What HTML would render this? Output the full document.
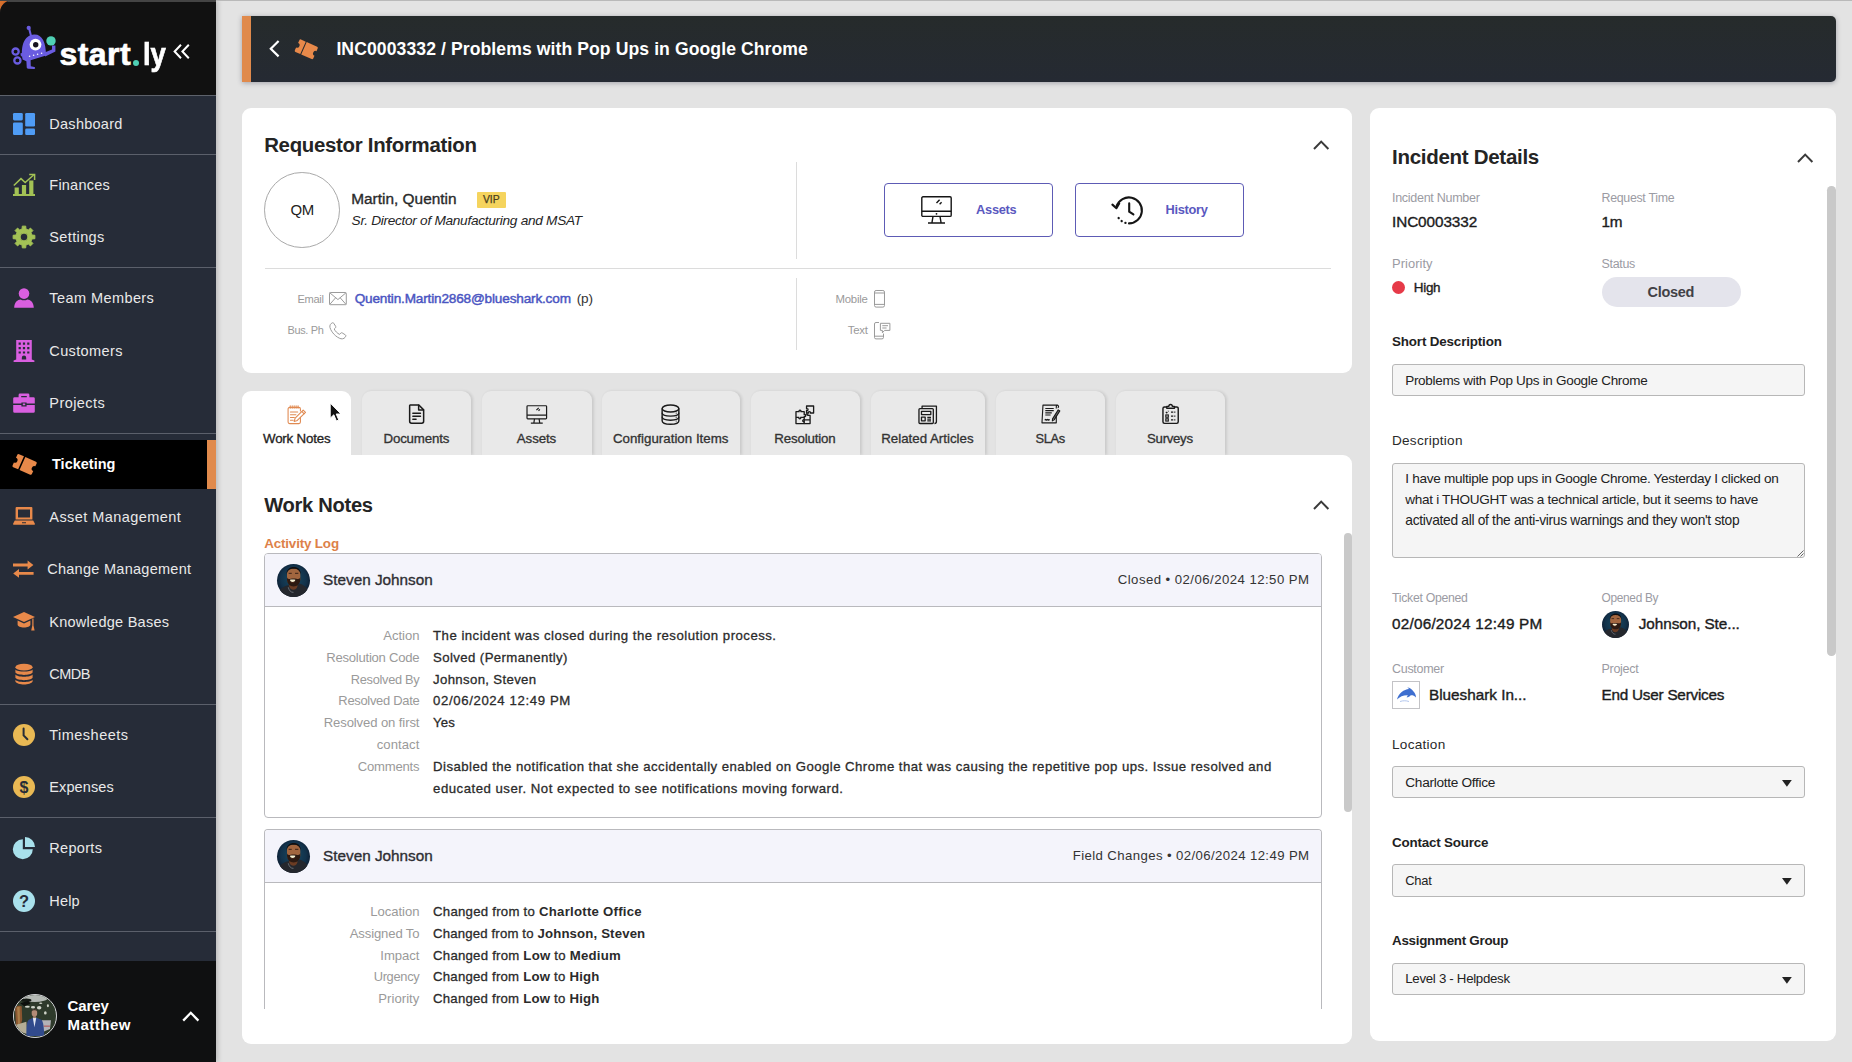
<!DOCTYPE html>
<html lang="en">
<head>
<meta charset="utf-8">
<title>INC0003332 / Problems with Pop Ups in Google Chrome</title>
<style>
*{box-sizing:border-box;margin:0;padding:0}
html,body{width:1852px;height:1062px;overflow:hidden}
body{background:#e3e3e3;font-family:"Liberation Sans",Arial,sans-serif;color:#222;position:relative}
.abs{position:absolute}
.t{position:absolute;white-space:nowrap;display:block}
.r{text-align:right}
svg{display:block;position:absolute;overflow:visible}
/* sidebar */
#corner{position:absolute;left:0;top:0;width:30px;height:30px;background:#d9702c}
#side{position:absolute;left:0;top:0;width:216px;height:1062px;background:#262c38;border-top-left-radius:13px;overflow:hidden;box-shadow:2px 0 5px rgba(0,0,0,.18)}
#side .logo{position:absolute;left:0;top:0;width:216px;height:95px;background:#111;border-top:2px solid #444;border-bottom:1px solid #5d626b;height:96px}
#side .sep{position:absolute;left:0;width:216px;height:1px;background:#5b606b}
#side .it{position:absolute;left:0;width:216px;height:48.8px}
#side .it.on{background:#000;height:49.3px}
#side .it.on:after{content:"";position:absolute;right:0;top:0;width:9px;height:100%;background:#e08a4c}
#side .it .t{left:49.3px;top:.5px;line-height:48.8px;font-size:14.5px;color:#e9e9e9}
#side .it svg{left:13px;top:13.4px;width:22px;height:22px}
#side .user{position:absolute;left:0;top:961px;width:216px;height:101px;background:#0f1011}
/* top bar */
#top{position:absolute;left:242px;top:16px;width:1594px;height:66px;background:linear-gradient(#262b2b,#252a33);border-left:9px solid #e08a4c;border-radius:0 5px 5px 0;box-shadow:0 1px 5px rgba(40,40,60,.35)}
.card{position:absolute;background:#fff;border-radius:9px}
.lbl{color:#9a9a9a}
</style>
</head>
<body>
<div id="corner"></div>
<aside id="side">
<div class="logo"><svg style="left:10.6px;top:23.5px;width:45px;height:44px" viewBox="0 0 45 44">
<g fill="#6a5ce0" stroke="none">
<circle cx="17.7" cy="1.9" r="2.1"/>
<path d="M16.9 2 L18.9 1.6 L21.2 10.4 L19.2 10.8Z"/>
<path d="M11.6 33.5 C9.2 20 13.5 9.2 23 8.6 C31 8.2 35 16 35 29.4 L19.6 34.2 L19.8 40.2 L23.4 40.9 C24.6 41.3 24.4 43 23 43 L17.2 42.8 C16.2 42.7 15.7 42 15.7 41 L15.4 35.2 Z"/>
<path d="M33.5 26.4 L41 23.4 L41 19.4 L44.4 19.4 L44.4 25.6 L34.2 30.4Z"/>
<path d="M9.4 27.4 L12.4 26.6 L13 29.6 L10 30.4Z"/>
</g>
<g fill="none" stroke="#6a5ce0" stroke-width="2.3"><circle cx="4.6" cy="25.6" r="3.1"/><circle cx="6.4" cy="34.4" r="3.1"/></g>
<circle cx="24.5" cy="18.6" r="5.9" fill="#fff"/><circle cx="24.7" cy="18.8" r="2.7" fill="#17131f"/>
<circle cx="40" cy="14.9" r="4.7" fill="#4fd0b4"/>
<g fill="#fff"><circle cx="18.6" cy="30.3" r=".8"/><circle cx="22.6" cy="29.3" r=".8"/><circle cx="26.6" cy="28.3" r=".8"/><circle cx="30.6" cy="27.3" r=".8"/></g>
</svg>
<span class="t" style="letter-spacing:0.409px;left:59.6px;top:29.6px;line-height:44px;font-size:32px;font-weight:700;color:#fff;-webkit-text-stroke:.7px #fff">start</span>
<span class="t" style="left:132.9px;top:57.6px;width:6.6px;height:6.6px;border-radius:50%;background:#4fd0b4;color:#4fd0b4;font-size:8px;line-height:6.6px;font-weight:700;overflow:hidden;text-align:center">.</span>
<span class="t" style="letter-spacing:-0.234px;left:142.6px;top:29.6px;line-height:44px;font-size:32px;font-weight:700;color:#fff;-webkit-text-stroke:.7px #fff;transform:scaleX(.86);transform-origin:0 0">ly</span>
<svg style="left:173px;top:41.5px;width:17px;height:15px" viewBox="0 0 17 15"><path d="M8 0.8 L1.6 7.5 L8 14.2 M15.8 0.8 L9.4 7.5 L15.8 14.2" fill="none" stroke="#fff" stroke-width="2"/></svg>
</div>
<nav>
<div class="it" style="top:99.6px"><svg viewBox="0 0 22 22"><g fill="#4f9cf5"><rect x="0" y="0" width="9.8" height="7.4" rx="1.3"/><rect x="0" y="9.4" width="9.8" height="12.6" rx="1.3"/><rect x="12.2" y="0" width="9.8" height="13.6" rx="1.3"/><rect x="12.2" y="15.6" width="9.8" height="6.4" rx="1.3"/></g></svg><span class="t" style="letter-spacing:0.266px">Dashboard</span></div>
<div class="it" style="top:160.5px"><svg viewBox="0 0 22 22"><g fill="#a3c255"><rect x="0" y="20" width="22" height="2"/><rect x="1.6" y="13.5" width="4.2" height="6.5"/><rect x="8.9" y="11" width="4.2" height="9"/><rect x="16.2" y="6.5" width="4.2" height="13.5"/></g><path d="M0.8 11.5 L8 4.6 L12.2 8.6 L20.6 1" fill="none" stroke="#a3c255" stroke-width="1.5"/><path d="M16.2 0.6 H21.6 V6" fill="none" stroke="#a3c255" stroke-width="1.5"/></svg><span class="t" style="letter-spacing:0.221px">Finances</span></div>
<div class="it" style="top:212.9px"><svg viewBox="0 0 22 22"><path d="M9.28 0.14 L12.72 0.14 L12.91 3.03 L15.28 4.01 L17.47 2.10 L19.90 4.53 L17.99 6.72 L18.97 9.09 L21.86 9.28 L21.86 12.72 L18.97 12.91 L17.99 15.28 L19.90 17.47 L17.47 19.90 L15.28 17.99 L12.91 18.97 L12.72 21.86 L9.28 21.86 L9.09 18.97 L6.72 17.99 L4.53 19.90 L2.10 17.47 L4.01 15.28 L3.03 12.91 L0.14 12.72 L0.14 9.28 L3.03 9.09 L4.01 6.72 L2.10 4.53 L4.53 2.10 L6.72 4.01 L9.09 3.03Z M7.1 11 a3.9 3.9 0 1 0 7.8 0 a3.9 3.9 0 1 0 -7.8 0Z" fill="#a3c255" fill-rule="evenodd" stroke="#a3c255" stroke-width="1" stroke-linejoin="round"/></svg><span class="t" style="letter-spacing:0.373px">Settings</span></div>
<div class="it" style="top:273.9px"><svg viewBox="0 0 22 22"><g fill="#d95fe0"><circle cx="11" cy="6.6" r="5.3"/><path d="M1.2 20.8 C1.2 15.2 4.8 12.4 7.6 12.4 C9.6 13.6 12.4 13.6 14.4 12.4 C17.2 12.4 20.8 15.2 20.8 20.8 Z"/></g></svg><span class="t" style="letter-spacing:0.424px">Team Members</span></div>
<div class="it" style="top:326.3px"><svg viewBox="0 0 22 22"><path fill="#d95fe0" fill-rule="evenodd" d="M3.2 0 H18.8 V19.4 L21.4 20.6 V22 H0.6 V20.6 L3.2 19.4 Z M5.6 2.6 V4.8 H7.8 V2.6Z M9.9 2.6 V4.8 H12.1 V2.6Z M14.2 2.6 V4.8 H16.4 V2.6Z M5.6 7 V9.2 H7.8 V7Z M9.9 7 V9.2 H12.1 V7Z M14.2 7 V9.2 H16.4 V7Z M5.6 11.4 V13.6 H7.8 V11.4Z M9.9 11.4 V13.6 H12.1 V11.4Z M14.2 11.4 V13.6 H16.4 V11.4Z M8.8 19.6 V17.8 a2.2 2.2 0 0 1 4.4 0 V19.6 Z"/></svg><span class="t" style="letter-spacing:0.375px">Customers</span></div>
<div class="it" style="top:378.8px"><svg viewBox="0 0 22 22"><path fill="#d95fe0" fill-rule="evenodd" d="M7 1.6 H15 a1.4 1.4 0 0 1 1.4 1.4 V5.2 H20.4 a1.4 1.4 0 0 1 1.4 1.4 V11.4 H13.6 V10.4 H8.4 V11.4 H0.2 V6.6 a1.4 1.4 0 0 1 1.4 -1.4 H5.6 V3 a1.4 1.4 0 0 1 1.4 -1.4 Z M8.2 3.9 V5.2 H13.8 V3.9Z M0.2 12.9 H8.4 V14.4 H13.6 V12.9 H21.8 V19.4 a1.4 1.4 0 0 1 -1.4 1.4 H1.6 a1.4 1.4 0 0 1 -1.4 -1.4 Z M9.8 11.6 V13.2 H12.2 V11.6Z"/></svg><span class="t" style="letter-spacing:0.428px">Projects</span></div>
<div class="it on" style="top:439.6px"><svg viewBox="0 0 22 22"><g transform="translate(0.6 0.4) rotate(24 11 11) scale(1.08) translate(-0.8 0.2)"><path fill="#e8894a" d="M1.2 4.6 a1.2 1.2 0 0 1 1.2 -1.2 H7.4 V16.6 H2.4 a1.2 1.2 0 0 1 -1.2 -1.2 V12.4 a2.4 2.4 0 0 0 0 -4.8 Z M8.8 3.4 H19.6 a1.2 1.2 0 0 1 1.2 1.2 V7.6 a2.4 2.4 0 0 0 0 4.8 V15.4 a1.2 1.2 0 0 1 -1.2 1.2 H8.8 Z"/></g></svg><span class="t" style="letter-spacing:0.001px;left:52px;font-weight:700;color:#fff">Ticketing</span></div>
<div class="it" style="top:492.1px"><svg viewBox="0 0 22 22"><path fill="#e8894a" fill-rule="evenodd" d="M3.6 2 H18.4 a1 1 0 0 1 1 1 V14.6 H2.6 V3 a1 1 0 0 1 1 -1 Z M5 4.4 V12.4 H17 V4.4Z M1.8 15.4 H20.2 L21.8 18.6 a.8 .8 0 0 1 -.8 1.2 H1 a.8 .8 0 0 1 -.8 -1.2 Z M9 17.2 V18.2 H13 V17.2Z"/></svg><span class="t" style="letter-spacing:0.430px">Asset Management</span></div>
<div class="it" style="top:544.5px"><svg viewBox="0 0 22 22"><path fill="#e8894a" d="M0 5.6 H14.6 V2.6 L20.4 7 L14.6 11.4 V8.4 H0 Z M20.6 14 H6 V11 L0.2 15.4 L6 19.8 V16.8 H20.6 Z"/></svg><span class="t" style="letter-spacing:0.275px;left:47.2px">Change Management</span></div>
<div class="it" style="top:597.0px"><svg viewBox="0 0 22 22"><g fill="#e8894a"><path d="M11 2 L22 7 L11 12 L0 7 Z"/><path d="M4.6 10.6 L11 13.5 L17.4 10.6 V14.6 C17.4 16.4 14.4 17.6 11 17.6 C7.6 17.6 4.6 16.4 4.6 14.6 Z"/><path d="M19.3 8.6 H20.5 V15.4 L21.6 20.4 H18.2 L19.3 15.4 Z"/></g></svg><span class="t" style="letter-spacing:0.257px">Knowledge Bases</span></div>
<div class="it" style="top:649.5px"><svg viewBox="0 0 22 22"><g fill="#e8894a"><ellipse cx="11" cy="4.2" rx="8.6" ry="3.4"/><path d="M2.4 6.4 C4.4 9.2 17.6 9.2 19.6 6.4 V9.6 C17.6 12.8 4.4 12.8 2.4 9.6 Z"/><path d="M2.4 11.6 C4.4 14.6 17.6 14.6 19.6 11.6 V14.8 C17.6 18 4.4 18 2.4 14.8 Z"/><path d="M2.4 16.8 C4.4 19.8 17.6 19.8 19.6 16.8 V18.6 C17.6 22.6 4.4 22.6 2.4 18.6 Z"/></g></svg><span class="t" style="letter-spacing:-0.515px">CMDB</span></div>
<div class="it" style="top:710.4px"><svg viewBox="0 0 22 22"><circle cx="11" cy="11" r="11" fill="#e9b954"/><path d="M10.6 4.6 V11.4 L14.4 15.2" fill="none" stroke="#262c38" stroke-width="2" stroke-linecap="round"/></svg><span class="t" style="letter-spacing:0.473px">Timesheets</span></div>
<div class="it" style="top:762.8px"><svg viewBox="0 0 22 22"><circle cx="11" cy="11" r="11" fill="#e9b954"/><text x="11" y="16.6" text-anchor="middle" font-family="Liberation Sans,sans-serif" font-weight="700" font-size="16" fill="#262c38">$</text></svg><span class="t" style="letter-spacing:0.095px">Expenses</span></div>
<div class="it" style="top:823.7px"><svg viewBox="0 0 22 22"><g fill="#a9e1ec"><path d="M9.8 2.2 V12.2 H19.8 A10 10 0 1 1 9.8 2.2 Z"/><path d="M12 0 A10 10 0 0 1 22 10 H12 Z"/></g></svg><span class="t" style="letter-spacing:0.311px">Reports</span></div>
<div class="it" style="top:876.2px"><svg viewBox="0 0 22 22"><circle cx="11" cy="11" r="11" fill="#a9e1ec"/><text x="11" y="16.8" text-anchor="middle" font-family="Liberation Sans,sans-serif" font-weight="700" font-size="16.5" fill="#262c38">?</text></svg><span class="t" style="letter-spacing:0.163px">Help</span></div>
<div class="sep" style="top:154.0px"></div>
<div class="sep" style="top:267.3px"></div>
<div class="sep" style="top:433.1px"></div>
<div class="sep" style="top:703.8px"></div>
<div class="sep" style="top:817.2px"></div>
<div class="sep" style="top:930.5px"></div>
</nav>
<div class="user"><div class="abs" style="left:13px;top:32.9px;width:43.9px;height:43.9px;border-radius:50%;border:1.4px solid #dcdce0;overflow:hidden;background:#2c3828">
<svg style="left:0;top:0;width:41.1px;height:41.1px;filter:blur(.55px)" viewBox="0 0 40 40"><rect width="40" height="40" fill="#2e3a2b"/><ellipse cx="20" cy="2.6" rx="13" ry="4.2" fill="#b4b9b4"/><ellipse cx="12" cy="5" rx="5" ry="1.6" fill="#151a15"/><path d="M6 8 L14 5.500 L16 8.500 L10 11Z" fill="#0d100d"/><g fill="#cfd3c8"><ellipse cx="18.500" cy="12" rx="2" ry="1.200"/><ellipse cx="24.500" cy="12.500" rx="2.200" ry="1.700"/><ellipse cx="13" cy="11.500" rx="2.400" ry="1"/><ellipse cx="30.500" cy="17.500" rx="1.300" ry="1.600"/><ellipse cx="33" cy="10.500" rx="1" ry="1.400"/><ellipse cx="26" cy="8" rx="1.600" ry=".8"/></g><path d="M1 12 C3 10 6 10 7.500 11 L8 24 C7 28 6 31 7 34 L2 30Z" fill="#8a5630"/><path d="M3 12 L5.500 11.500 L5.800 27 L4 30Z" fill="#a87c48"/><path d="M2 29 L12 26 L13 38 L6 36Z" fill="#b4ad96"/><path d="M27 24.500 H36 L35 33 L28 36Z" fill="#b2b2b8"/><path d="M29 30.300 H35" stroke="#b03434" stroke-width=".8"/><path d="M12 40 C12 30 12.500 25.500 14.500 24 L18 22.300 H22.500 L26.500 24 C28.500 25.500 29 30 29.500 40Z" fill="#314a8c"/><path d="M18.300 22 H21.700 L19.900 31.500Z" fill="#e2e6f2"/><ellipse cx="19.900" cy="17.400" rx="2.700" ry="3.700" fill="#b38b77"/><path d="M17.200 16 C17 12.800 22.800 12.800 22.600 16 C21.500 14.600 18.300 14.600 17.200 16Z" fill="#3a3029"/><rect x="18.800" y="20.300" width="2.300" height="2.200" fill="#a27c68"/></svg>
</div>
<span class="t" style="letter-spacing:-0.067px;left:67.5px;top:36.3px;line-height:18.3px;font-size:15px;font-weight:700;color:#fff">Carey</span>
<span class="t" style="letter-spacing:0.492px;left:67.5px;top:54.8px;line-height:18.3px;font-size:15px;font-weight:700;color:#fff">Matthew</span>
<svg style="left:182.4px;top:50px;width:17.6px;height:10.6px" viewBox="0 0 17.6 10.6"><path d="M1.2 9.6 L8.8 1.8 L16.4 9.6" fill="none" stroke="#fff" stroke-width="2.3"/></svg>
</div>
</aside>
<header id="top">
<svg style="left:18px;top:24.4px;width:11px;height:17.4px" viewBox="0 0 11 17.4"><path d="M9.6 1 L1.8 8.7 L9.6 16.4" fill="none" stroke="#fff" stroke-width="2.2"/></svg>
<svg style="left:44.2px;top:23.2px;width:22.6px;height:20.6px" viewBox="0 0 22 20"><g transform="rotate(24 11 10)"><path fill="#e8894a" d="M1.2 4.6 a1.2 1.2 0 0 1 1.2 -1.2 H7.5 V16.6 H2.4 a1.2 1.2 0 0 1 -1.2 -1.2 V12.4 a2.4 2.4 0 0 0 0 -4.8 Z M8.5 3.4 H19.6 a1.2 1.2 0 0 1 1.2 1.2 V7.6 a2.4 2.4 0 0 0 0 4.8 V15.4 a1.2 1.2 0 0 1 -1.2 1.2 H8.5 Z"/></g></svg>
<h1 class="t" style="letter-spacing:0.083px;left:85.4px;top:21px;line-height:24px;font-size:17.6px;font-weight:700;color:#fff">INC0003332 / Problems with Pop Ups in Google Chrome</h1>
</header>
<section class="card" id="req" style="left:242px;top:108px;width:1110px;height:265.4px">
<h2 class="t" style="letter-spacing:-0.300px;left:22.2px;top:24.4px;line-height:26px;font-size:20.41px;font-weight:700;color:#242424">Requestor Information</h2>
<svg style="left:1070.6px;top:32px;width:16.4px;height:10px" viewBox="0 0 16.4 10"><path d="M1 9 L8.2 1.6 L15.4 9" fill="none" stroke="#3a3a3a" stroke-width="2"/></svg>
<div class="abs" style="left:22.3px;top:64.3px;width:75.7px;height:75.7px;border-radius:50%;border:1px solid #a9a9a9"></div>
<span class="t" style="letter-spacing:-0.300px;left:22.3px;top:64.3px;width:75.7px;text-align:center;line-height:75.7px;font-size:14.94px;color:#222">QM</span>
<span class="t" style="letter-spacing:0.013px;left:109.2px;top:81px;line-height:20px;font-size:15.4px;color:#2a2a2a;-webkit-text-stroke:.35px #2a2a2a">Martin, Quentin</span>
<span class="t" style="letter-spacing:0.020px;left:234.6px;top:83.7px;width:29.4px;height:16.4px;background:#f5d45e;border-radius:1px;text-align:center;line-height:16.6px;font-size:10.4px;color:#4a4020;-webkit-text-stroke:.25px #4a4020">VIP</span>
<span class="t" style="letter-spacing:-0.300px;left:109.6px;top:103.4px;line-height:20px;font-size:13.68px;font-style:italic;color:#262626">Sr. Director of Manufacturing and MSAT</span>
<div class="abs" style="left:554.4px;top:53.5px;width:1px;height:97.4px;background:#dcdcdc"></div>
<div class="abs" style="left:22.6px;top:160px;width:1066px;height:1px;background:#dcdcdc"></div>
<div class="abs" style="left:554.4px;top:170px;width:1px;height:72px;background:#dcdcdc"></div>
<!-- buttons -->
<div class="abs" style="left:642.3px;top:75.3px;width:168.6px;height:53.6px;border:1px solid #5d5bb5;border-radius:4px">
<svg style="left:36px;top:12px;width:31px;height:28px" viewBox="0 0 31 28"><g fill="none" stroke="#151515" stroke-width="1.4"><rect x="0.8" y="0.8" width="29.4" height="19.6" rx="1.2"/><path d="M0.8 15.2 H30.2 M12 20.4 L11 26.4 M19 20.4 L20 26.4 M7 27 H24 M15.5 7 L18.6 3.8 M18.6 8.2 L20.6 6.2"/></g><circle cx="15.5" cy="17.8" r=".9" fill="#151515"/></svg>
<span class="t" style="letter-spacing:-0.300px;left:90.8px;top:15.3px;line-height:20px;font-size:12.83px;font-weight:700;color:#5a58bf">Assets</span>
</div>
<div class="abs" style="left:833.1px;top:75.3px;width:168.6px;height:53.6px;border:1px solid #5d5bb5;border-radius:4px">
<svg style="left:34.6px;top:11.6px;width:33px;height:29px" viewBox="0 0 33 29"><g fill="none" stroke="#151515" stroke-width="2.1" stroke-linecap="round"><path d="M5.6 10.2 A13 13 0 1 1 18 27.4"/><path d="M18.2 7.4 V15.6 L22.4 18.4"/><path d="M14.4 26.9 L14.5 26.9 M10.6 25 L10.7 25.1 M7.6 22 L7.7 22.1" stroke-width="2.3"/><path d="M1.4 8.6 L5.4 12.2 L8.2 7.4" stroke-linejoin="round"/></g></svg>
<span class="t" style="letter-spacing:-0.300px;left:89.4px;top:15.3px;line-height:20px;font-size:12.82px;font-weight:700;color:#5a58bf">History</span>
</div>
<!-- contact rows -->
<span class="t lbl" style="letter-spacing:-0.300px;left:55.4px;top:180.5px;line-height:20px;font-size:11.11px">Email</span>
<svg style="left:87.4px;top:184.4px;width:17.8px;height:13.2px" viewBox="0 0 17.8 13.2"><g fill="none" stroke="#9a9a9a" stroke-width="1"><rect x=".5" y=".5" width="16.8" height="12.2" rx=".8"/><path d="M.8 .8 L8.9 7.6 L17 .8 M.8 12.4 L6.6 5.8 M17 12.4 L11.2 5.8"/></g></svg>
<a class="t" style="letter-spacing:-0.172px;left:112.7px;top:180.5px;line-height:20px;font-size:13.6px;color:#4a55c2;-webkit-text-stroke:.45px #4a55c2;text-decoration:none">Quentin.Martin2868@blueshark.com</a>
<span class="t" style="letter-spacing:-0.250px;left:334.8px;top:180.5px;line-height:20px;font-size:13.6px;color:#333">(p)</span>
<span class="t lbl" style="letter-spacing:-0.300px;left:45.4px;top:212px;line-height:20px;font-size:10.96px">Bus. Ph</span>
<svg style="left:87.4px;top:213.6px;width:17.6px;height:17.6px" viewBox="0 0 17.6 17.6"><path d="M3.4 .8 C1.6 1.6 .4 3.2 1 5.6 C2.4 10.4 7.2 15.4 12 16.8 C14.4 17.2 16 16 16.8 14.2 C17 13.6 16.8 13.2 16.4 12.9 L13.2 10.9 C12.7 10.6 12.2 10.7 11.8 11.1 L10.6 12.4 C8.4 11.4 6.2 9.2 5.2 7 L6.5 5.8 C6.9 5.4 7 4.9 6.7 4.4 L4.7 1.2 C4.4 .8 4 .6 3.4 .8 Z" fill="none" stroke="#9a9a9a" stroke-width="1"/></svg>
<span class="t lbl" style="letter-spacing:-0.211px;left:593.4px;top:180.5px;line-height:20px;font-size:11.4px">Mobile</span>
<svg style="left:632px;top:181.8px;width:11px;height:17.6px" viewBox="0 0 11 17.6"><g fill="none" stroke="#9a9a9a" stroke-width="1"><rect x=".5" y=".5" width="10" height="16.6" rx="1.6"/><path d="M.5 3 H10.5 M.5 14.4 H10.5"/></g></svg>
<span class="t lbl" style="letter-spacing:-0.226px;left:605.7px;top:212px;line-height:20px;font-size:11.4px">Text</span>
<svg style="left:632px;top:213.8px;width:16.4px;height:17.4px" viewBox="0 0 16.4 17.4"><g fill="none" stroke="#9a9a9a" stroke-width="1"><path d="M5 .5 H2 a1.5 1.5 0 0 0 -1.500 1.500 V15.4 a1.500 1.500 0 0 0 1.500 1.500 H8 a1.500 1.500 0 0 0 1.500 -1.500 V11.600 M.5 14.200 H9.500"/><path d="M6.400 1.300 H15.900 V8.400 H10.600 L8.400 10.800 V8.400 H6.400Z M8.300 3.700 H14 M8.300 6 H12.600"/></g></svg>
</section>
<nav id="tabs">
<div class="abs" style="left:242.0px;top:391.2px;width:109.0px;height:63.6px;background:#fff;border-radius:9px 9px 0 0;"><svg style="left:44.5px;top:13.5px;width:19.8px;height:19.6px" viewBox="0 0 20 20"><g fill="none" stroke="#e08a52" stroke-width="1.1" stroke-linecap="round" stroke-linejoin="round"><path d="M13.6 12.6 V17.4 a1.6 1.600 0 0 1 -1.600 1.600 H2.600 a1.600 1.600 0 0 1 -1.600 -1.600 V4 a1.600 1.600 0 0 1 1.600 -1.600 H12 a1.600 1.600 0 0 1 1.600 1.600 V6"/><path d="M3.200 .8 V3.400 M5.200 .8 V3.400 M7.200 .8 V3.400 M9.200 .8 V3.400 M11.200 .8 V3.400"/><path d="M3.400 7.200 H10.800 M3.400 10 H9 M3.400 12.800 H7.400 M3.400 15.600 H6.200"/><path d="M16.400 5.200 L18.800 7.600 L10.400 15.800 L7.200 16.800 L8.200 13.400 Z M15 6.600 L17.400 9"/></g></svg><span class="t" style="letter-spacing:-0.181px;left:21.0px;top:37.9px;line-height:20px;font-size:13.3px;color:#222;-webkit-text-stroke:.32px #222">Work Notes</span></div>
<div class="abs" style="left:362.1px;top:391.2px;width:109.4px;height:63.6px;background:#e9e9e9;border-radius:9px 9px 0 0;box-shadow:1.5px 0 3px rgba(0,0,0,.11);"><svg style="left:45.7px;top:13.0px;width:17.3px;height:20.3px" viewBox="1.35 -0.15 17.3 20.3"><g fill="none" stroke="#1a1a1a" stroke-width="1.5" stroke-linecap="round" stroke-linejoin="round"><path d="M3.400 .9 H12.200 L17 5.700 V17.200 a1.900 1.900 0 0 1 -1.900 1.900 H4.900 a1.900 1.900 0 0 1 -1.900 -1.900 V2.400 a1.500 1.500 0 0 1 .4 -1.500 Z"/><path d="M12 1 V5.800 H16.800"/><path d="M6.200 9.200 H13.800 M6.200 12.200 H13.800 M6.200 15.200 H9.400"/></g></svg><span class="t" style="letter-spacing:-0.172px;left:21.4px;top:37.9px;line-height:20px;font-size:13.3px;color:#333;-webkit-text-stroke:.32px #333">Documents</span></div>
<div class="abs" style="left:482.0px;top:391.2px;width:109.6px;height:63.6px;background:#e9e9e9;border-radius:9px 9px 0 0;box-shadow:1.5px 0 3px rgba(0,0,0,.11);"><svg style="left:43.5px;top:13.8px;width:21.6px;height:19.2px" viewBox="0 0 22 20"><g fill="none" stroke="#1a1a1a" stroke-width="1.250" stroke-linejoin="round"><rect x=".8" y=".8" width="20.400" height="13.600" rx=".8"/><path d="M.8 10.600 H21.200 M8.600 14.400 L8 18.400 M13.400 14.400 L14 18.400 M4.800 18.900 H17.200 M10.600 5.400 L13 3 M12.800 6 L14.200 4.600"/></g></svg><span class="t" style="letter-spacing:-0.092px;left:34.8px;top:37.9px;line-height:20px;font-size:13.3px;color:#333;-webkit-text-stroke:.32px #333">Assets</span></div>
<div class="abs" style="left:601.9px;top:391.2px;width:137.8px;height:63.6px;background:#e9e9e9;border-radius:9px 9px 0 0;box-shadow:1.5px 0 3px rgba(0,0,0,.11);"><svg style="left:59.1px;top:12.4px;width:19.0px;height:21.2px" viewBox="0 0 20 22"><g fill="none" stroke="#1a1a1a" stroke-width="1.500"><ellipse cx="10" cy="4.600" rx="8.800" ry="3.700"/><path d="M1.200 4.600 V17.400 C1.200 19.600 5 21.100 10 21.100 C15 21.100 18.800 19.600 18.800 17.400 V4.600"/><path d="M1.200 9 C1.200 11.200 5 12.600 10 12.600 C15 12.600 18.800 11.200 18.800 9 M1.200 13.300 C1.200 15.500 5 16.900 10 16.900 C15 16.900 18.800 15.500 18.800 13.300"/></g><g fill="#1a1a1a"><circle cx="16" cy="9.400" r=".6"/><circle cx="16" cy="13.700" r=".6"/><circle cx="16" cy="17.800" r=".6"/></g></svg><span class="t" style="letter-spacing:0.016px;left:11.0px;top:37.9px;line-height:20px;font-size:13.3px;color:#333;-webkit-text-stroke:.32px #333">Configuration Items</span></div>
<div class="abs" style="left:750.7px;top:391.2px;width:109.6px;height:63.6px;background:#e9e9e9;border-radius:9px 9px 0 0;box-shadow:1.5px 0 3px rgba(0,0,0,.11);"><svg style="left:44.8px;top:13.4px;width:19.6px;height:19.6px" viewBox="0 0 20 20"><g fill="none" stroke="#1a1a1a" stroke-width="1.350" stroke-linejoin="round"><path d="M1 6.800 H4.200 C3.400 4.800 6.800 4.800 6 6.800 H9.400 V10 C11.400 9.200 11.400 12.600 9.400 11.800 V15.200 V19 H1 Z"/><path d="M9.400 15.200 H15.400 V19 H9.400 M15.400 15.200 V10.600 H13 C13.800 8.600 10.400 8.600 11.200 10.600"/><path d="M1 12.600 H4 C3.200 14.600 6.600 14.600 5.800 12.600 H9.400 M9.400 15.200 C7.400 14.400 7.400 17.800 9.400 17"/><path d="M11.800 1 H19 V8.200 H15.600 C16.400 6.200 13 6.200 13.800 8.200 H11.800 V5.600 C13.800 6.400 13.800 3 11.800 3.800 Z"/></g></svg><span class="t" style="letter-spacing:-0.152px;left:23.6px;top:37.9px;line-height:20px;font-size:13.3px;color:#333;-webkit-text-stroke:.32px #333">Resolution</span></div>
<div class="abs" style="left:870.7px;top:391.2px;width:114.4px;height:63.6px;background:#e9e9e9;border-radius:9px 9px 0 0;box-shadow:1.5px 0 3px rgba(0,0,0,.11);"><svg style="left:47.5px;top:13.4px;width:19.4px;height:19.6px" viewBox="0 0 20 20"><g fill="none" stroke="#1a1a1a" stroke-width="1.350" stroke-linejoin="round"><path d="M4.200 3.600 V1 H19 V17 a2 2 0 0 1 -2 2"/><rect x="1" y="3.600" width="14.800" height="15.400" rx="1"/><rect x="3.600" y="6.400" width="9.600" height="3.400"/><rect x="3.600" y="12.400" width="3.800" height="3.800"/><path d="M9.600 12.600 H13.400 M9.600 14.400 H13.400 M9.600 16.200 H13.400"/></g></svg><span class="t" style="letter-spacing:0.001px;left:10.5px;top:37.9px;line-height:20px;font-size:13.3px;color:#333;-webkit-text-stroke:.32px #333">Related Articles</span></div>
<div class="abs" style="left:995.5px;top:391.2px;width:109.6px;height:63.6px;background:#e9e9e9;border-radius:9px 9px 0 0;box-shadow:1.5px 0 3px rgba(0,0,0,.11);"><svg style="left:45.1px;top:13.2px;width:19.6px;height:20.0px" viewBox="0 0 20 20"><g fill="none" stroke="#1a1a1a" stroke-width="1.150" stroke-linejoin="round"><path d="M15.600 11.600 V19 H1 L2 1 H16.400 C15.200 1.600 15.400 3 15.600 4.400"/><path d="M16.400 1 C18.200 1 18.400 3.400 17 3.600"/><path d="M4.400 4.400 H13 M4.400 6.600 H13 M4.400 8.800 H11 M4.400 11 H9.800"/><path d="M3.800 16.400 L4.800 15.400 L5.800 16.400 L6.800 15.400 L7.800 16.400 L8.800 15.400"/><path d="M17.600 5.800 L19.200 6.800 L13.400 16 L11.600 17 L11.800 15 Z"/></g><path d="M17.600 5.800 L19.200 6.800 L13.400 16 L11.800 15 Z" fill="#1a1a1a" opacity=".55"/></svg><span class="t" style="letter-spacing:-0.300px;left:39.9px;top:37.9px;line-height:20px;font-size:12.86px;color:#333;-webkit-text-stroke:.32px #333">SLAs</span></div>
<div class="abs" style="left:1115.7px;top:391.2px;width:109.6px;height:63.6px;background:#e9e9e9;border-radius:9px 9px 0 0;box-shadow:1.5px 0 3px rgba(0,0,0,.11);"><svg style="left:45.9px;top:12.2px;width:17.2px;height:21.6px" viewBox="0 0 18 22"><g fill="none" stroke="#1a1a1a" stroke-width="1.500" stroke-linejoin="round"><path d="M5 3.800 H2.600 a1.600 1.600 0 0 0 -1.600 1.600 V19.400 a1.600 1.600 0 0 0 1.600 1.600 H15.400 a1.600 1.600 0 0 0 1.600 -1.600 V5.400 a1.600 1.600 0 0 0 -1.600 -1.600 H13"/><path d="M5 5.200 V3.200 H7.200 C7.200 .6 10.800 .6 10.800 3.200 H13 V5.200 Z"/></g><g fill="none" stroke="#1a1a1a" stroke-width="1.200"><path d="M4 9 L5 10 L6.800 8 M9.400 9.200 H14 M9.400 13.400 H14 M9.400 17.400 H14" stroke-dasharray="2.400 1"/><rect x="4" y="12.200" width="2.600" height="2.400"/><rect x="4" y="16.200" width="2.600" height="2.400"/></g></svg><span class="t" style="letter-spacing:-0.300px;left:31.4px;top:37.9px;line-height:20px;font-size:13.22px;color:#333;-webkit-text-stroke:.32px #333">Surveys</span></div>
</nav>
<svg style="left:328.6px;top:401.6px;width:13px;height:21px" viewBox="0 0 13 21"><path d="M1.200 1 V16.200 L4.800 12.800 L7.400 19 L9.800 18 L7.200 12 H12 Z" fill="#111" stroke="#fff" stroke-width="1" stroke-linejoin="round"/></svg>
<section class="card" id="notes" style="left:242px;top:454.700px;width:1110.300px;height:589.500px;border-radius:0 9px 9px 9px">
<h2 class="t" style="letter-spacing:-0.300px;left:22.200px;top:37.300px;line-height:26px;font-size:20.15px;font-weight:700;color:#242424">Work Notes</h2>
<svg style="left:1070.600px;top:45.300px;width:16.400px;height:10px" viewBox="0 0 16.400 10"><path d="M1 9 L8.200 1.600 L15.400 9" fill="none" stroke="#3a3a3a" stroke-width="2"/></svg>
<h3 class="t" style="letter-spacing:-0.160px;left:22.200px;top:78.900px;line-height:20px;font-size:13.400px;font-weight:700;color:#dd8149">Activity Log</h3>
<div class="abs" style="left:22.400px;top:78.300px;width:1080px;height:476px;overflow:hidden">
<article class="abs" style="left:0;top:20.3px;width:1057.6px;height:264.6px;border:1px solid #b9b9bd;border-radius:4px;background:#fff">
<div class="abs" style="left:0;top:0;width:1055.6px;height:52.800px;background:#f4f4fb;border-bottom:1px solid #b9b9bd;border-radius:3px 3px 0 0"></div>
<svg style="left:11.6px;top:9.4px;width:33px;height:33px" viewBox="0 0 34 34"><defs><clipPath id="ava"><circle cx="17" cy="17" r="17"/></clipPath><radialGradient id="avag" cx="50%" cy="45%" r="55%"><stop offset="0" stop-color="#174a63"/><stop offset=".7" stop-color="#12324b"/><stop offset="1" stop-color="#0d1c30"/></radialGradient></defs><circle cx="17" cy="17" r="17" fill="url(#avag)"/><g clip-path="url(#ava)"><path d="M0 36 C1 25.500 6 23.200 12.500 21.600 L17 25 L23.500 20.400 C29 22 33 25 34 36Z" fill="#24272d"/><path d="M12.600 19 H21 V23 C20 27.500 14.500 28 12.600 23.500Z" fill="#6b3c23"/><path d="M10.300 10 C10.300 2.800 24 2.800 24 10 V15.500 C24 24.500 10.300 24.500 10.300 15.500Z" fill="#a2663f"/><path d="M10 10.800 C8.500 1 25.500 0 24.400 11 C23.600 6.800 21.500 5 17 5 C12.800 5 10.600 6.800 10 10.800Z" fill="#120e0e"/><path d="M10.300 13.500 C10.900 16.500 12.500 15.200 17 15 C21.500 15.200 23.300 16.500 24 13.500 V16 C24 25.500 10.300 25.500 10.300 16Z" fill="#2c1a12"/><path d="M13.300 16.300 C14.800 16 17.500 16 18.900 16.300 C18.500 19.300 13.700 19.300 13.300 16.300Z" fill="#f6f0d2"/><path d="M14 18 C15 19.300 17.300 19.300 18.300 18 C17.800 19.900 14.500 19.900 14 18Z" fill="#7a3a22"/><path d="M12 9.600 H15.200 M18.600 9.600 H22" stroke="#2a1710" stroke-width=".9" fill="none"/><path d="M11.600 24 C12.500 27.500 14.500 29.500 17 29.200" stroke="#9aa0a8" stroke-width=".6" fill="none"/></g></svg>
<span class="t" style="letter-spacing:-0.009px;left:57.700px;top:14.800px;line-height:22px;font-size:15.300px;color:#2e2e33;-webkit-text-stroke:.35px #2e2e33">Steven Johnson</span>
<span class="t r" style="letter-spacing:0.451px;right:11.500px;top:14.900px;line-height:22px;font-size:13.200px;color:#333">Closed • 02/06/2024 12:50 PM</span>
<span class="t lbl r" style="letter-spacing:-0.056px;right:901.600px;top:71.8px;line-height:20px;font-size:13.1px">Action</span><span class="t" style="letter-spacing:0.482px;left:167.700px;top:71.8px;line-height:20px;font-size:13.2px;color:#2b2b2b;-webkit-text-stroke:.3px #2b2b2b">The incident was closed during the resolution process.</span>
<span class="t lbl r" style="letter-spacing:-0.242px;right:901.600px;top:93.6px;line-height:20px;font-size:13.1px">Resolution Code</span><span class="t" style="letter-spacing:0.399px;left:167.700px;top:93.6px;line-height:20px;font-size:13.2px;color:#2b2b2b;-webkit-text-stroke:.3px #2b2b2b">Solved (Permanently)</span>
<span class="t lbl r" style="letter-spacing:-0.300px;right:901.600px;top:115.4px;line-height:20px;font-size:12.80px">Resolved By</span><span class="t" style="letter-spacing:0.341px;left:167.700px;top:115.4px;line-height:20px;font-size:13.2px;color:#2b2b2b;-webkit-text-stroke:.3px #2b2b2b">Johnson, Steven</span>
<span class="t lbl r" style="letter-spacing:-0.300px;right:901.600px;top:137.2px;line-height:20px;font-size:12.96px">Resolved Date</span><span class="t" style="letter-spacing:0.620px;left:167.700px;top:137.2px;line-height:20px;font-size:13.2px;color:#2b2b2b;-webkit-text-stroke:.3px #2b2b2b">02/06/2024 12:49 PM</span>
<span class="t lbl r" style="letter-spacing:-0.105px;right:901.600px;top:159.0px;line-height:20px;font-size:13.1px">Resolved on first</span><span class="t" style="letter-spacing:0.114px;left:167.700px;top:159.0px;line-height:20px;font-size:13.2px;color:#2b2b2b;-webkit-text-stroke:.3px #2b2b2b">Yes</span>
<span class="t lbl r" style="letter-spacing:0.059px;right:901.600px;top:180.8px;line-height:20px;font-size:13.1px">contact</span>
<span class="t lbl r" style="letter-spacing:-0.215px;right:901.600px;top:202.6px;line-height:20px;font-size:13.1px">Comments</span><span class="t" style="letter-spacing:0.455px;left:167.700px;top:202.6px;line-height:20px;font-size:13.2px;color:#2b2b2b;-webkit-text-stroke:.3px #2b2b2b">Disabled the notification that she accidentally enabled on Google Chrome that was causing the repetitive pop ups. Issue resolved and</span>
<span class="t" style="letter-spacing:0.501px;left:167.700px;top:224.4px;line-height:20px;font-size:13.2px;color:#2b2b2b;-webkit-text-stroke:.3px #2b2b2b">educated user. Not expected to see notifications moving forward.</span>
</article>
<article class="abs" style="left:0;top:296.5px;width:1057.6px;height:200.0px;border:1px solid #b9b9bd;border-radius:4px 4px 0 0;border-bottom:none;background:#fff">
<div class="abs" style="left:0;top:0;width:1055.6px;height:52.800px;background:#f4f4fb;border-bottom:1px solid #b9b9bd;border-radius:3px 3px 0 0"></div>
<svg style="left:11.6px;top:9.4px;width:33px;height:33px" viewBox="0 0 34 34"><defs><clipPath id="avb"><circle cx="17" cy="17" r="17"/></clipPath><radialGradient id="avbg" cx="50%" cy="45%" r="55%"><stop offset="0" stop-color="#174a63"/><stop offset=".7" stop-color="#12324b"/><stop offset="1" stop-color="#0d1c30"/></radialGradient></defs><circle cx="17" cy="17" r="17" fill="url(#avbg)"/><g clip-path="url(#avb)"><path d="M0 36 C1 25.500 6 23.200 12.500 21.600 L17 25 L23.500 20.400 C29 22 33 25 34 36Z" fill="#24272d"/><path d="M12.600 19 H21 V23 C20 27.500 14.500 28 12.600 23.500Z" fill="#6b3c23"/><path d="M10.300 10 C10.300 2.800 24 2.800 24 10 V15.500 C24 24.500 10.300 24.500 10.300 15.500Z" fill="#a2663f"/><path d="M10 10.800 C8.500 1 25.500 0 24.400 11 C23.600 6.800 21.500 5 17 5 C12.800 5 10.600 6.800 10 10.800Z" fill="#120e0e"/><path d="M10.300 13.500 C10.900 16.500 12.500 15.200 17 15 C21.500 15.200 23.300 16.500 24 13.500 V16 C24 25.500 10.300 25.500 10.300 16Z" fill="#2c1a12"/><path d="M13.300 16.300 C14.800 16 17.500 16 18.900 16.300 C18.500 19.300 13.700 19.300 13.300 16.300Z" fill="#f6f0d2"/><path d="M14 18 C15 19.300 17.300 19.300 18.300 18 C17.800 19.900 14.500 19.900 14 18Z" fill="#7a3a22"/><path d="M12 9.600 H15.200 M18.600 9.600 H22" stroke="#2a1710" stroke-width=".9" fill="none"/><path d="M11.600 24 C12.500 27.500 14.500 29.500 17 29.200" stroke="#9aa0a8" stroke-width=".6" fill="none"/></g></svg>
<span class="t" style="letter-spacing:-0.009px;left:57.700px;top:14.800px;line-height:22px;font-size:15.300px;color:#2e2e33;-webkit-text-stroke:.35px #2e2e33">Steven Johnson</span>
<span class="t r" style="letter-spacing:0.389px;right:11.500px;top:14.900px;line-height:22px;font-size:13.200px;color:#333">Field Changes • 02/06/2024 12:49 PM</span>
<span class="t lbl r" style="letter-spacing:-0.055px;right:901.600px;top:71.6px;line-height:20px;font-size:13.1px">Location</span><span class="t" style="letter-spacing:0.250px;left:167.700px;top:71.6px;line-height:20px;font-size:13.2px;color:#2b2b2b;-webkit-text-stroke:.3px #2b2b2b">Changed from to <b style="font-weight:700;-webkit-text-stroke:0">Charlotte Office</b></span>
<span class="t lbl r" style="letter-spacing:-0.134px;right:901.600px;top:93.4px;line-height:20px;font-size:13.1px">Assigned To</span><span class="t" style="letter-spacing:0.156px;left:167.700px;top:93.4px;line-height:20px;font-size:13.2px;color:#2b2b2b;-webkit-text-stroke:.3px #2b2b2b">Changed from to <b style="font-weight:700;-webkit-text-stroke:0">Johnson, Steven</b></span>
<span class="t lbl r" style="letter-spacing:-0.036px;right:901.600px;top:115.2px;line-height:20px;font-size:13.1px">Impact</span><span class="t" style="letter-spacing:0.233px;left:167.700px;top:115.2px;line-height:20px;font-size:13.2px;color:#2b2b2b;-webkit-text-stroke:.3px #2b2b2b">Changed from <b style="font-weight:700;-webkit-text-stroke:0">Low</b> to <b style="font-weight:700;-webkit-text-stroke:0">Medium</b></span>
<span class="t lbl r" style="letter-spacing:-0.300px;right:901.600px;top:137.0px;line-height:20px;font-size:12.85px">Urgency</span><span class="t" style="letter-spacing:0.219px;left:167.700px;top:137.0px;line-height:20px;font-size:13.2px;color:#2b2b2b;-webkit-text-stroke:.3px #2b2b2b">Changed from <b style="font-weight:700;-webkit-text-stroke:0">Low</b> to <b style="font-weight:700;-webkit-text-stroke:0">High</b></span>
<span class="t lbl r" style="letter-spacing:0.047px;right:901.600px;top:158.8px;line-height:20px;font-size:13.1px">Priority</span><span class="t" style="letter-spacing:0.219px;left:167.700px;top:158.8px;line-height:20px;font-size:13.2px;color:#2b2b2b;-webkit-text-stroke:.3px #2b2b2b">Changed from <b style="font-weight:700;-webkit-text-stroke:0">Low</b> to <b style="font-weight:700;-webkit-text-stroke:0">High</b></span>
</article>
</div>
<div class="abs" style="left:1101.700px;top:78px;width:8.400px;height:279.500px;border-radius:4.200px;background:#c9c9c9"></div>
</section>
<section class="card" id="det" style="left:1370.0px;top:108.0px;width:465.800px;height:933.400px">
<h2 class="t" style="letter-spacing:-0.300px;left:22px;top:36.300px;line-height:26px;font-size:20.54px;font-weight:700;color:#242424">Incident Details</h2>
<svg style="left:426.500px;top:44.800px;width:16.400px;height:10px" viewBox="0 0 16.400 10"><path d="M1 9 L8.200 1.600 L15.400 9" fill="none" stroke="#3a3a3a" stroke-width="2"/></svg>
<div class="abs" style="left:457.200px;top:77.600px;width:8.600px;height:470px;border-radius:4.300px;background:#c9c9c9"></div>
<span class="t" style="letter-spacing:-0.300px;left:22.0px;top:79.7px;line-height:20px;font-size:12.56px;color:#9b9ba3;">Incident Number</span>
<span class="t" style="letter-spacing:-0.300px;left:231.5px;top:79.7px;line-height:20px;font-size:12.38px;color:#9b9ba3;">Request Time</span>
<span class="t" style="letter-spacing:-0.074px;left:22.0px;top:104.0px;line-height:20px;font-size:15.3px;color:#1c1c1c;-webkit-text-stroke:.38px #1c1c1c;">INC0003332</span>
<span class="t" style="letter-spacing:-0.167px;left:231.5px;top:104.0px;line-height:20px;font-size:15.3px;color:#1c1c1c;-webkit-text-stroke:.38px #1c1c1c;">1m</span>
<span class="t" style="letter-spacing:0.065px;left:22.0px;top:146.3px;line-height:20px;font-size:12.9px;color:#9b9ba3;">Priority</span>
<span class="t" style="letter-spacing:-0.300px;left:231.5px;top:146.3px;line-height:20px;font-size:12.44px;color:#9b9ba3;">Status</span>
<div class="abs" style="left:22px;top:173.3px;width:13.200px;height:13.200px;border-radius:50%;background:#e63a48"></div>
<span class="t" style="letter-spacing:-0.300px;left:43.8px;top:169.6px;line-height:20px;font-size:13.44px;color:#1c1c1c;-webkit-text-stroke:.38px #1c1c1c;">High</span>
<div class="abs" style="left:231.5px;top:169.3px;width:139.300px;height:30.100px;border-radius:15.100px;background:#e4e4ec"></div>
<span class="t" style="letter-spacing:-0.300px;left:277.6px;top:173.9px;line-height:20px;font-size:14.47px;font-weight:700;color:#414146;">Closed</span>
<span class="t" style="letter-spacing:-0.154px;left:22.0px;top:224.4px;line-height:20px;font-size:13.4px;font-weight:700;color:#222;">Short Description</span>
<div class="abs" style="left:22px;top:256.3px;width:413px;height:32.1px;background:#f5f5f5;border:1px solid #b7b7b7;border-radius:3px"></div>
<span class="t" style="letter-spacing:-0.300px;left:35.2px;top:262.6px;line-height:20px;font-size:13.50px;color:#222;">Problems with Pop Ups in Google Chrome</span>
<span class="t" style="letter-spacing:0.248px;left:22.0px;top:322.5px;line-height:20px;font-size:13.6px;color:#2a2a2a;">Description</span>
<div class="abs" style="left:22px;top:354.8px;width:413px;height:95.5px;background:#f5f5f5;border:1px solid #b7b7b7;border-radius:3px"></div>
<span class="t" style="letter-spacing:-0.300px;left:35.3px;top:361.3px;line-height:20px;font-size:13.58px;color:#222;">I have multiple pop ups in Google Chrome. Yesterday I clicked on</span>
<span class="t" style="letter-spacing:-0.300px;left:35.3px;top:382.1px;line-height:20px;font-size:13.55px;color:#222;">what i THOUGHT was a technical article, but it seems to have</span>
<span class="t" style="letter-spacing:-0.300px;left:35.3px;top:403.0px;line-height:20px;font-size:13.79px;color:#222;">activated all of the anti-virus warnings and they won't stop</span>
<svg style="left:426.5px;top:442.2px;width:7px;height:7px" viewBox="0 0 7 7"><path d="M0.5 6.500 L6.500 .5 M3.500 6.500 L6.500 3.500" stroke="#555" stroke-width=".9" fill="none"/></svg>
<span class="t" style="letter-spacing:-0.300px;left:22.0px;top:479.7px;line-height:20px;font-size:12.31px;color:#9b9ba3;">Ticket Opened</span>
<span class="t" style="letter-spacing:-0.300px;left:231.5px;top:479.7px;line-height:20px;font-size:11.89px;color:#9b9ba3;">Opened By</span>
<span class="t" style="letter-spacing:0.222px;left:22.0px;top:506.1px;line-height:20px;font-size:15.3px;color:#1c1c1c;-webkit-text-stroke:.38px #1c1c1c;">02/06/2024 12:49 PM</span>
<svg style="left:232.0px;top:503.0px;width:27px;height:27px" viewBox="0 0 34 34"><defs><clipPath id="avd"><circle cx="17" cy="17" r="17"/></clipPath><radialGradient id="avdg" cx="50%" cy="45%" r="55%"><stop offset="0" stop-color="#174a63"/><stop offset=".7" stop-color="#12324b"/><stop offset="1" stop-color="#0d1c30"/></radialGradient></defs><circle cx="17" cy="17" r="17" fill="url(#avdg)"/><g clip-path="url(#avd)"><path d="M0 36 C1 25.500 6 23.200 12.500 21.600 L17 25 L23.500 20.400 C29 22 33 25 34 36Z" fill="#24272d"/><path d="M12.600 19 H21 V23 C20 27.500 14.500 28 12.600 23.500Z" fill="#6b3c23"/><path d="M10.300 10 C10.300 2.800 24 2.800 24 10 V15.500 C24 24.500 10.300 24.500 10.300 15.500Z" fill="#a2663f"/><path d="M10 10.800 C8.500 1 25.500 0 24.400 11 C23.600 6.800 21.500 5 17 5 C12.800 5 10.600 6.800 10 10.800Z" fill="#120e0e"/><path d="M10.300 13.500 C10.900 16.500 12.500 15.200 17 15 C21.500 15.200 23.300 16.500 24 13.500 V16 C24 25.500 10.300 25.500 10.300 16Z" fill="#2c1a12"/><path d="M13.300 16.300 C14.800 16 17.500 16 18.900 16.300 C18.500 19.300 13.700 19.300 13.300 16.300Z" fill="#f6f0d2"/><path d="M14 18 C15 19.300 17.300 19.300 18.300 18 C17.800 19.900 14.500 19.900 14 18Z" fill="#7a3a22"/><path d="M12 9.600 H15.200 M18.600 9.600 H22" stroke="#2a1710" stroke-width=".9" fill="none"/><path d="M11.600 24 C12.500 27.500 14.500 29.500 17 29.200" stroke="#9aa0a8" stroke-width=".6" fill="none"/></g></svg>
<span class="t" style="letter-spacing:-0.072px;left:268.8px;top:506.1px;line-height:20px;font-size:15.3px;color:#1c1c1c;-webkit-text-stroke:.38px #1c1c1c;">Johnson, Ste...</span>
<span class="t" style="letter-spacing:-0.300px;left:22.0px;top:550.6px;line-height:20px;font-size:12.50px;color:#9b9ba3;">Customer</span>
<span class="t" style="letter-spacing:-0.300px;left:231.5px;top:550.6px;line-height:20px;font-size:12.52px;color:#9b9ba3;">Project</span>
<div class="abs" style="left:22px;top:573.3px;width:27.800px;height:27.800px;border:1px solid #c3c3c6;background:#fff"><svg style="left:3px;top:5px;width:21px;height:16px" viewBox="0 0 21 16"><path d="M1 12.500 C2.500 6 8 2.500 13 2 C12.500 1.200 12 .8 11 .4 C14 .6 16 2 17.500 4.500 C19 6 20 8 20 10.500 C18.500 8.800 16.500 8.200 14.500 8.400 C13.500 9.600 12 10.400 10.500 10.200 C11.200 9.600 11.600 9 11.800 8.200 C7.500 8 4 9.500 1 12.500Z" fill="#3e6fd0"/><path d="M4 14.500 C7 13.500 10 13.500 13 14.500" stroke="#9fb8e8" stroke-width=".8" fill="none"/></svg></div>
<span class="t" style="letter-spacing:-0.013px;left:59.0px;top:577.0px;line-height:20px;font-size:15.3px;color:#1c1c1c;-webkit-text-stroke:.38px #1c1c1c;">Blueshark In...</span>
<span class="t" style="letter-spacing:-0.235px;left:231.5px;top:577.0px;line-height:20px;font-size:15.3px;color:#1c1c1c;-webkit-text-stroke:.38px #1c1c1c;">End User Services</span>
<span class="t" style="letter-spacing:0.266px;left:22.0px;top:626.7px;line-height:20px;font-size:13.6px;color:#2a2a2a;">Location</span>
<div class="abs" style="left:22px;top:658.3px;width:413px;height:32.2px;background:#f5f5f5;border:1px solid #b7b7b7;border-radius:3px"></div><span class="t" style="letter-spacing:-0.300px;left:35.3px;top:664.5px;line-height:20px;font-size:13.66px;color:#222;">Charlotte Office</span><svg style="left:412.0px;top:672.0px;width:9.800px;height:6.800px" viewBox="0 0 9.800 6.800"><path d="M0 0 H9.800 L4.900 6.800Z" fill="#222"/></svg>
<span class="t" style="letter-spacing:-0.198px;left:22.0px;top:724.5px;line-height:20px;font-size:13.4px;font-weight:700;color:#222;">Contact Source</span>
<div class="abs" style="left:22px;top:756.4px;width:413px;height:32.2px;background:#f5f5f5;border:1px solid #b7b7b7;border-radius:3px"></div><span class="t" style="letter-spacing:-0.300px;left:35.3px;top:762.6px;line-height:20px;font-size:12.95px;color:#222;">Chat</span><svg style="left:412.0px;top:770.1px;width:9.800px;height:6.800px" viewBox="0 0 9.800 6.800"><path d="M0 0 H9.800 L4.900 6.800Z" fill="#222"/></svg>
<span class="t" style="letter-spacing:-0.273px;left:22.0px;top:822.7px;line-height:20px;font-size:13.4px;font-weight:700;color:#222;">Assignment Group</span>
<div class="abs" style="left:22px;top:854.8px;width:413px;height:32.1px;background:#f5f5f5;border:1px solid #b7b7b7;border-radius:3px"></div><span class="t" style="letter-spacing:-0.300px;left:35.3px;top:860.9px;line-height:20px;font-size:13.28px;color:#222;">Level 3 - Helpdesk</span><svg style="left:412.0px;top:868.5px;width:9.800px;height:6.800px" viewBox="0 0 9.800 6.800"><path d="M0 0 H9.800 L4.900 6.800Z" fill="#222"/></svg>
</section>
<div class="abs" style="left:0;top:0;width:1852px;height:1.4px;background:linear-gradient(90deg,#444 0,#444 216px,#b9b9b9 216px)"></div>
</body>
</html>
